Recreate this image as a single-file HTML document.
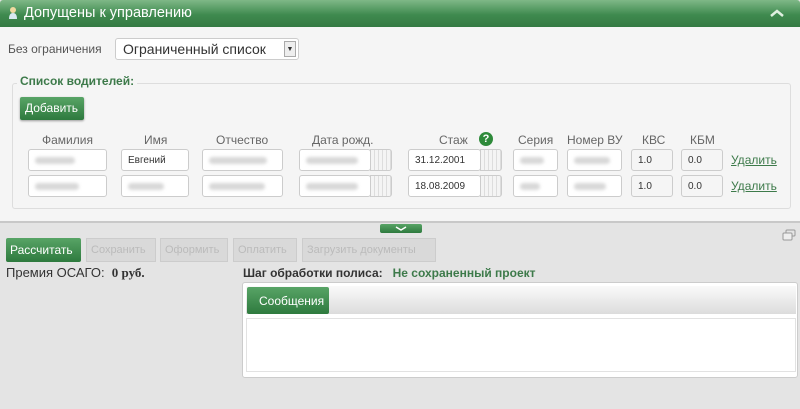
<!DOCTYPE html>
<html><head><meta charset="utf-8"><style>
*{box-sizing:border-box;margin:0;padding:0}
body{width:800px;height:409px;overflow:hidden;background:#e4e4e4;font-family:"Liberation Sans","DejaVu Sans",sans-serif;font-size:12px;color:#444;position:relative}
.a{position:absolute}
.hdr{left:0;top:0;width:800px;height:27px;background:linear-gradient(#7fb887,#3f8a4f 55%,#347a43);border-radius:3px 3px 0 0}
.hdr span{position:absolute;left:24px;top:5px;color:#fff;font-size:14.5px}
.top{left:0;top:27px;width:800px;height:196px;background:#f5f5f5;border-bottom:2px solid #c8c8c8}
.inp{position:absolute;height:22px;background:#fff;border:1px solid #ccc;border-radius:3px;font-size:10px;padding:5px 0 0 6px;color:#333}
.blur{position:absolute;left:6px;top:7px;height:7px;background:#d8d8d8;border-radius:4px;filter:blur(1.5px)}
.cal{position:absolute;width:22px;height:22px;border:1px solid #ccc;background:repeating-linear-gradient(90deg,#f4f4f4 0 3px,#ddd 3px 4px),#eee;border-radius:0 3px 3px 0}
.lab{position:absolute;top:133px;font-size:12px;color:#666}
.del{position:absolute;left:731px;color:#3d7a4a;text-decoration:underline;font-size:12px}
.gbtn{background:linear-gradient(#58a466,#2e7a3e);color:#fff;border-radius:2px}
.dbtn{position:absolute;top:238px;height:24px;background:#d9d9d9;border:1px solid #ccc;color:#bbb;font-size:11px;padding:5px 4px 0;white-space:nowrap}
</style></head><body>
<div class="a hdr"><span>Допущены к управлению</span>
<svg class="a" style="left:8px;top:6px" width="10" height="14"><circle cx="5" cy="4" r="3" fill="#f0d9a0"/><path d="M1 13 Q1 7 5 7 Q9 7 9 13Z" fill="#d8e8f0"/></svg>
<svg class="a" style="left:768px;top:8px" width="18" height="10"><path d="M3 8 L9 3 L15 8" stroke="#dff0e0" stroke-width="2.5" fill="none"/></svg></div>
<div class="a top"></div>
<div class="a" style="left:8px;top:42px;color:#555">Без ограничения</div>
<div class="a" style="left:115px;top:38px;width:184px;height:22px;background:#fff;border:1px solid #ccc;border-radius:3px;font-size:14px;padding:2px 0 0 7px;color:#333">Ограниченный список
<div class="a" style="right:2px;top:2px;width:12px;height:16px;background:#eee;border:1px solid #aaa;font-size:7px;text-align:center;padding-top:4px">▼</div></div>
<div class="a" style="left:12px;top:83px;width:779px;height:126px;border:1px solid #ddd;border-radius:3px"></div>
<div class="a" style="left:17px;top:74px;background:#f5f5f5;padding:0 3px;color:#3d7a4a;font-weight:bold;font-size:12px">Список водителей:</div>
<div class="a gbtn" style="left:20px;top:97px;width:64px;height:23px;font-size:12px;padding:4px 0 0 5px;box-shadow:0 1px 2px #999">Добавить</div>
<div class="lab" style="left:42px">Фамилия</div><div class="lab" style="left:144px">Имя</div><div class="lab" style="left:216px">Отчество</div><div class="lab" style="left:312px">Дата рожд.</div><div class="lab" style="left:439px">Стаж</div><div class="lab" style="left:518px">Серия</div><div class="lab" style="left:567px">Номер ВУ</div><div class="lab" style="left:642px">КВС</div><div class="lab" style="left:690px">КБМ</div>
<div class="a" style="left:479px;top:132px;width:14px;height:14px;border-radius:50%;background:#2e8a3a;color:#fff;font-weight:bold;font-size:11px;text-align:center;line-height:14px">?</div>
<div class="inp" style="left:28px;top:149px;width:79px"><div class="blur" style="width:40px"></div></div>
<div class="inp" style="left:121px;top:149px;width:68px">Евгений</div>
<div class="inp" style="left:202px;top:149px;width:81px"><div class="blur" style="width:58px"></div></div>
<div class="inp" style="left:299px;top:149px;width:72px"><div class="blur" style="width:52px"></div></div><div class="cal" style="left:370px;top:149px"></div>
<div class="inp" style="left:408px;top:149px;width:73px">31.12.2001</div><div class="cal" style="left:480px;top:149px"></div>
<div class="inp" style="left:513px;top:149px;width:45px"><div class="blur" style="width:24px"></div></div>
<div class="inp" style="left:567px;top:149px;width:55px"><div class="blur" style="width:36px"></div></div>
<div class="inp" style="left:631px;top:149px;width:42px;background:#f5f5f5">1.0</div>
<div class="inp" style="left:681px;top:149px;width:42px;background:#f5f5f5">0.0</div>
<div class="del" style="top:153px">Удалить</div>
<div class="inp" style="left:28px;top:175px;width:79px"><div class="blur" style="width:44px"></div></div>
<div class="inp" style="left:121px;top:175px;width:68px"><div class="blur" style="width:36px"></div></div>
<div class="inp" style="left:202px;top:175px;width:81px"><div class="blur" style="width:56px"></div></div>
<div class="inp" style="left:299px;top:175px;width:72px"><div class="blur" style="width:52px"></div></div><div class="cal" style="left:370px;top:175px"></div>
<div class="inp" style="left:408px;top:175px;width:73px">18.08.2009</div><div class="cal" style="left:480px;top:175px"></div>
<div class="inp" style="left:513px;top:175px;width:45px"><div class="blur" style="width:20px"></div></div>
<div class="inp" style="left:567px;top:175px;width:55px"><div class="blur" style="width:32px"></div></div>
<div class="inp" style="left:631px;top:175px;width:42px;background:#f5f5f5">1.0</div>
<div class="inp" style="left:681px;top:175px;width:42px;background:#f5f5f5">0.0</div>
<div class="del" style="top:179px">Удалить</div>
<div class="a gbtn" style="left:380px;top:224px;width:42px;height:9px"><svg class="a" style="left:14px;top:1px" width="14" height="7"><path d="M2 2 L7 5 L12 2" stroke="#fff" stroke-width="1.5" fill="none"/></svg></div>
<svg class="a" style="left:782px;top:229px" width="14" height="12"><rect x="4" y="1" width="9" height="6" rx="1" fill="none" stroke="#999"/><rect x="1" y="4" width="9" height="7" rx="1" fill="#eee" stroke="#999"/></svg>
<div class="a gbtn" style="left:6px;top:238px;width:75px;height:24px;font-size:12px;padding:5px 0 0 4px">Рассчитать</div>
<div class="dbtn" style="left:86px;width:70px">Сохранить</div>
<div class="dbtn" style="left:160px;width:68px">Оформить</div>
<div class="dbtn" style="left:233px;width:64px">Оплатить</div>
<div class="dbtn" style="left:302px;width:134px">Загрузить документы</div>
<div class="a" style="left:6px;top:265px;font-size:13px;color:#333">Премия ОСАГО:&nbsp; <b style="font-family:'Liberation Serif',serif">0 руб.</b></div>
<div class="a" style="left:243px;top:266px;font-weight:bold;font-size:12px;color:#333">Шаг обработки полиса:&nbsp;&nbsp; <span style="color:#3d7a4a">Не сохраненный проект</span></div>
<div class="a" style="left:242px;top:282px;width:556px;height:96px;background:#fff;border:1px solid #ccc;border-radius:3px"></div>
<div class="a" style="left:246px;top:286px;width:550px;height:28px;background:linear-gradient(#fafafa,#dcdcdc)"></div>
<div class="a gbtn" style="left:247px;top:287px;width:82px;height:27px;font-size:12px;padding:7px 0 0 12px">Сообщения</div>
<div class="a" style="left:246px;top:318px;width:550px;height:54px;border:1px solid #e2e2e2"></div>
</body></html>
